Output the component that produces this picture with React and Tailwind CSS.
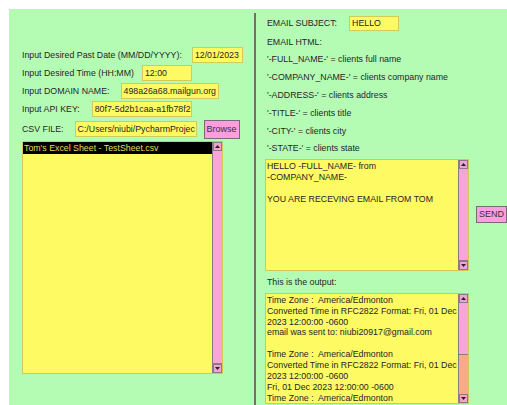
import React from 'react';

const font = { fontFamily: '"Liberation Sans", Arial, sans-serif' };

// tiny scroll arrow used at the ends of the Tk-style scrollbars
const Arrow = ({ up }) => (
  <div className="w-full h-[9px] flex items-center justify-center border border-[#8a7a86] bg-[#f7a0d6]">
    <svg width="5" height="3" viewBox="0 0 5 3">
      <path d={up ? 'M0 3 L2.5 0 L5 3 Z' : 'M0 0 L2.5 3 L5 0 Z'} fill="#222" />
    </svg>
  </div>
);

const Scrollbar = ({ thumb = 1 }) => (
  <div className="w-[10px] h-full flex flex-col border-l border-[#8a7a86] bg-[#fba98a]">
    <Arrow up />
    <div className="flex-1 flex flex-col">
      <div className="bg-[#fba4d8] border-b border-[#8a7a86]" style={{ flexGrow: thumb }} />
      <div style={{ flexGrow: 1 - thumb }} />
    </div>
    <Arrow />
  </div>
);

const Entry = ({ value, w, ml }) => (
  <div
    className={`h-[16px] bg-[#fdfa64] border border-[#d2cb5a] px-[2px] flex items-center overflow-hidden whitespace-nowrap ${w} ${ml}`}
  >
    {value}
  </div>
);

const FormRow = ({ label, value, w, ml }) => (
  <div className="flex items-center h-[18px]">
    <span>{label}</span>
    <Entry value={value} w={w} ml={ml} />
  </div>
);

const placeholders = [
  ["'-FULL_NAME-'", 'clients full name'],
  ["'-COMPANY_NAME-'", 'clients company name'],
  ["'-ADDRESS-'", 'clients address'],
  ["'-TITLE-'", 'clients title'],
  ["'-CITY-'", 'clients city'],
  ["'-STATE-'", 'clients state'],
];

const output = [
  'Time Zone :  America/Edmonton',
  'Converted Time in RFC2822 Format: Fri, 01 Dec',
  '2023 12:00:00 -0600',
  'email was sent to: niubi20917@gmail.com',
  '',
  'Time Zone :  America/Edmonton',
  'Converted Time in RFC2822 Format: Fri, 01 Dec',
  '2023 12:00:00 -0600',
  'Fri, 01 Dec 2023 12:00:00 -0600',
  'Time Zone :  America/Edmonton',
];

export default function App() {
  return (
    <div className="w-[507px] h-[405px] bg-white pl-[9px] pt-[9px] flex" style={font}>
      <div className="flex-1 flex bg-[#b4fcb4] text-[#262626] text-[8.8px] leading-[11px]">
        {/* left panel: inputs + csv list */}
        <div className="w-[245px] pl-[13px] pt-[37px] flex flex-col">
          <FormRow label="Input Desired Past Date (MM/DD/YYYY):" value="12/01/2023" w="w-[51px]" ml="ml-[10px]" />
          <FormRow label="Input Desired Time (HH:MM)" value="12:00" w="w-[50px]" ml="ml-[8px]" />
          <FormRow label="Input DOMAIN NAME:" value="498a26a68.mailgun.org" w="w-[98px]" ml="ml-[11px]" />
          <FormRow label="Input API KEY:" value="80f7-5d2b1caa-a1fb78f2" w="w-[100px]" ml="ml-[12px]" />
          <div className="flex items-center h-[20px] mt-[1px]">
            <span>CSV FILE:</span>
            <Entry value="C:/Users/niubi/PycharmProjec" w="w-[122px]" ml="ml-[11px]" />
            <button className="ml-[7px] w-[36px] h-[19px] bg-[#fd9ede] border border-[#7a6a76] text-[#333] text-[9px] leading-none">
              Browse
            </button>
          </div>
          <div className="mt-[2px] w-[201px] h-[233px] flex border border-[#cfc85a] bg-[#fdfa64]">
            <div className="flex-1">
              <div className="h-[12px] bg-black text-[#e6de52] pl-[1px] leading-[12px]">
                Tom's Excel Sheet - TestSheet.csv
              </div>
            </div>
            <Scrollbar />
          </div>
        </div>

        <div className="mt-[4px] w-[2px] bg-[#6f6f6f]" />

        {/* right panel: email composer + output log */}
        <div className="flex-1 pl-[9px] pt-[6px] flex flex-col">
          <div className="flex items-center h-[17px] pl-[2px]">
            <span>EMAIL SUBJECT:</span>
            <div className="ml-[12px] w-[50px] h-[15px] bg-[#fdfa64] border border-[#d2cb5a] px-[2px] flex items-center">
              HELLO
            </div>
          </div>
          <div className="h-[18px] flex items-center pl-[2px] mt-[1px]">EMAIL HTML:</div>
          {placeholders.map(([k, v]) => (
            <div key={k} className="h-[17.8px] flex items-center pl-[2px]">
              {k} = {v}
            </div>
          ))}
          <div className="flex items-center mt-[1px]">
            <div className="w-[204px] h-[112px] flex border border-[#cfc85a] bg-[#fdfa64]">
              <div className="flex-1 px-[1px] pt-[1px] whitespace-pre">
                {'HELLO -FULL_NAME- from\n-COMPANY_NAME-\n\nYOU ARE RECEVING EMAIL FROM TOM'}
              </div>
              <Scrollbar />
            </div>
            <button className="ml-[7px] w-[31px] h-[17px] bg-[#fd9ede] border border-[#7a6a76] text-[#333] text-[9px] leading-none">
              SEND
            </button>
          </div>
          <div className="mt-[6px] h-[12px] flex items-center pl-[2px]">This is the output:</div>
          <div className="mt-[4px] w-[204px] h-[111px] flex border border-[#cfc85a] bg-[#fdfa64]">
            <div className="flex-1 px-[1px] pt-[1px] whitespace-pre overflow-hidden">
              {output.map((l, i) => (
                <div key={i} className="h-[10.9px]">{l}</div>
              ))}
            </div>
            <Scrollbar thumb={0.57} />
          </div>
        </div>
      </div>
    </div>
  );
}
